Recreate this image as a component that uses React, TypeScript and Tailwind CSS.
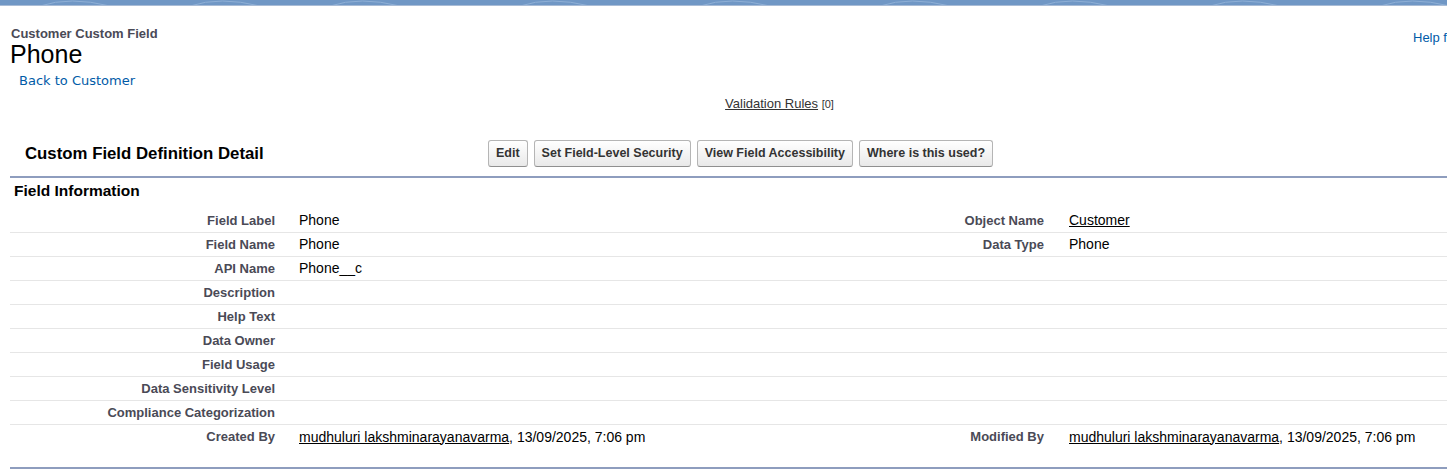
import React from 'react'

const rows: [string, React.ReactNode, string, React.ReactNode][] = [
	['Field Label', 'Phone', 'Object Name', <span className="underline">Customer</span>],
	['Field Name', 'Phone', 'Data Type', 'Phone'],
	['API Name', 'Phone__c', '', ''],
	['Description', '', '', ''],
	['Help Text', '', '', ''],
	['Data Owner', '', '', ''],
	['Field Usage', '', '', ''],
	['Data Sensitivity Level', '', '', ''],
	['Compliance Categorization', '', '', ''],
	[
		'Created By',
		<>
			<span className="underline">mudhuluri lakshminarayanavarma</span>, 13/09/2025, 7:06 pm
		</>,
		'Modified By',
		<>
			<span className="underline">mudhuluri lakshminarayanavarma</span>, 13/09/2025, 7:06 pm
		</>,
	],
]

function Btn({ label }: { label: string }) {
	return (
		<button className="h-[27px] rounded-[3px] border border-[#b5b5b5] border-b-[#8f8f8f] bg-gradient-to-b from-white to-[#e9e9e9] px-[7px] text-[12.5px] font-bold text-[#333]">
			{label}
		</button>
	)
}

function TopBand() {
	return (
		<div className="h-[6px] border-b border-[#a9bcd6] bg-[#7097c5]">
			<svg width="1447" height="5" className="block">
				{[40, 190, 330, 520, 700, 880, 1040, 1210, 1380].map(x => (
					<path key={x} d={`M${x} 6 Q${x + 30} -4 ${x + 70} 6`} stroke="#8fb0d6" strokeWidth="1" fill="none" />
				))}
			</svg>
		</div>
	)
}

export default function App() {
	return (
		<div className="min-h-[475px] w-full overflow-hidden bg-white font-['Liberation_Sans',Arial,sans-serif]">
			<TopBand />
			<div className="ml-[10px] w-[1539px]">
				{/* page title */}
				<div className="flex pt-[20px]">
					<div className="w-[1403px]">
						<div className="pl-[1px] text-[13px] leading-[15px] font-bold text-[#4a4a56]">Customer Custom Field</div>
						<h1 className="text-[25px] leading-[27px] text-black">Phone</h1>
						<div className="mt-[5px] pl-[9px] font-['DejaVu_Sans',Verdana,sans-serif] text-[13px] leading-[16px] text-[#015ba7]">
							Back to Customer
						</div>
					</div>
					<div className="mt-[4px] text-[13px] leading-[16px] whitespace-nowrap text-[#015ba7]">Help for this Page</div>
				</div>

				<div className="mt-[7px] text-center text-[13px] leading-[16px] text-[#333]">
					<span className="underline">Validation Rules</span> <span className="text-[11px]">[0]</span>
				</div>

				{/* page block header */}
				<div className="mt-[24px] flex items-center border-b-2 border-[#8e9dbe] pt-[4px] pb-[9px]">
					<h2 className="w-[478px] pl-[15px] text-[16.8px] font-bold text-black">Custom Field Definition Detail</h2>
					<div className="flex gap-[6px]">
						<Btn label="Edit" />
						<Btn label="Set Field-Level Security" />
						<Btn label="View Field Accessibility" />
						<Btn label="Where is this used?" />
					</div>
				</div>

				<h3 className="h-[31px] pt-[3px] pl-[4px] text-[15.5px] leading-[20px] font-bold text-black">Field Information</h3>

				{rows.map(([l1, v1, l2, v2], i) => (
					<div
						key={l1}
						className={`flex h-[24px] items-center text-[14px] ${i < rows.length - 1 ? 'border-b border-[#e6e6e6]' : ''}`}
					>
						<div className="w-[277px] pr-[12px] text-right text-[13px] font-bold text-[#4a4a56]">{l1}</div>
						<div className="w-[492px] pl-[12px] text-black">{v1}</div>
						<div className="w-[277px] pr-[12px] text-right text-[13px] font-bold text-[#4a4a56]">{l2}</div>
						<div className="w-[493px] pl-[13px] text-black">{v2}</div>
					</div>
				))}

				<div className="mt-[18px] border-t-2 border-[#8e9dbe]" />
			</div>
		</div>
	)
}
